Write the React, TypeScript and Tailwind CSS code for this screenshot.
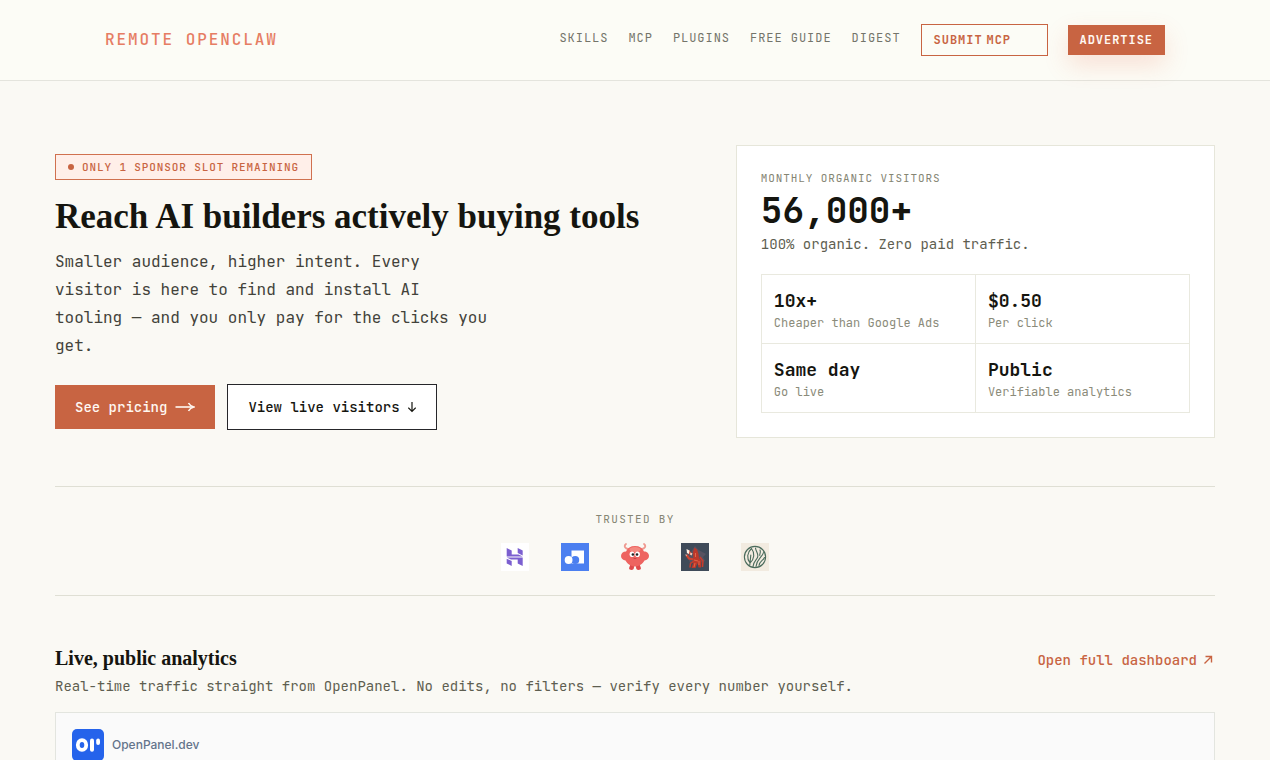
const navLinks = ["Skills", "MCP", "Plugins", "Free Guide", "Digest"];

const stats = [
    { value: "10x+", label: "Cheaper than Google Ads" },
    { value: "$0.50", label: "Per click" },
    { value: "Same day", label: "Go live" },
    { value: "Public", label: "Verifiable analytics" },
];

function Navbar() {
    return (
        <header className="border-b border-[#e4e4dd] bg-[#fcfcf6]">
            <div className="mx-auto flex h-20 max-w-[1160px] items-center justify-between px-[50px]">
                <a href="/" className="text-base font-medium tracking-[0.12em] text-[#e67d63] uppercase">
                    Remote OpenClaw
                </a>
                <nav className="flex items-center gap-5 text-xs tracking-[0.08em] uppercase">
                    {navLinks.map((name) => (
                        <a key={name} href="#" className="pb-1 text-[#74746a]">
                            {name}
                        </a>
                    ))}
                    <a href="#" className="flex h-8 items-center gap-1 border border-[#c86442] px-3 font-semibold text-[#c86442]">
                        <span>Submit</span>
                        <span className="w-12">MCP</span>
                    </a>
                    <a href="#" className="flex h-[30px] items-center bg-[#c86442] px-3 font-semibold text-[#fff8f2] shadow-[0_10px_24px_rgba(232,100,66,0.18)]">
                        Advertise
                    </a>
                </nav>
            </div>
        </header>
    );
}

function Hero() {
    return (
        <section className="grid grid-cols-[4fr_3fr] items-center gap-[42px] pt-16 pb-12">
            <div>
                <p className="inline-flex items-center gap-2 border border-[#d0714f] bg-[#ffefe9] px-3 py-1 text-[11px] leading-4 font-medium tracking-[0.08em] text-[#c86442] uppercase">
                    <span className="size-1.5 rounded-full bg-[#c86442]" />
                    Only 1 sponsor slot remaining
                </p>
                <h1 className="mt-4 font-['Liberation_Serif',serif] text-[35px] leading-[42px] font-bold whitespace-nowrap text-[#15150f]">
                    Reach AI builders actively buying tools
                </h1>
                <p className="mt-2.5 max-w-[440px] text-base leading-7 text-[#42423a]">
                    Smaller audience, higher intent. Every visitor is here to find and install AI tooling — and you only
                    pay for the clicks you get.
                </p>
                <div className="mt-6 flex items-center gap-3 text-sm leading-6 font-medium">
                    <a href="#pricing" className="flex items-center gap-2 bg-[#c86442] px-5 py-[10px] text-[#fff8f2]">
                        See pricing
                        <svg width="20" height="10" viewBox="0 0 20 10" fill="none" stroke="currentColor" strokeWidth="1.6">
                            <path d="M0.5 5H18" />
                            <path d="M13.5 1Q15 4 18.8 5Q15 6 13.5 9" />
                        </svg>
                    </a>
                    <a href="#analytics" className="flex items-center gap-2 border border-[#26262a] bg-white px-5 py-[10px] text-[#15150f]">
                        View live visitors
                        <svg width="8" height="12" viewBox="0 0 8 12" fill="none" stroke="currentColor" strokeWidth="1.2">
                            <path d="M4 1V10M0.3 6.6L4 10.3L7.7 6.6" />
                        </svg>
                    </a>
                </div>
            </div>
            <div className="border border-[#e6e6da] bg-white p-6">
                <p className="text-[11px] leading-4 tracking-[0.08em] text-[#858573] uppercase">
                    Monthly organic visitors
                </p>
                <p className="mt-1 text-[36px] leading-10 font-bold text-[#15150f]">56,000+</p>
                <p className="mt-1 text-sm leading-5 text-[#5e5e50]">100% organic. Zero paid traffic.</p>
                <dl className="mt-5 grid grid-cols-2 border-t border-l border-[#e9e9df]">
                    {stats.map((stat) => (
                        <div key={stat.label} className="flex flex-col-reverse border-r border-b border-[#e9e9df] p-3">
                            <dt className="text-xs text-[#8b8b7a]">{stat.label}</dt>
                            <dd className="text-lg leading-7 font-semibold text-[#15150f]">{stat.value}</dd>
                        </div>
                    ))}
                </dl>
            </div>
        </section>
    );
}

function PurpleLogo() {
    return (
        <svg className="size-7" viewBox="0 0 28 28">
            <rect width="28" height="28" fill="#fff" />
            <g fill="#7b5fd0">
                <path d="M5.7 5L10.7 7.6V11.6H17.5L21.7 13.6H5.7Z" />
                <path d="M16.7 5L21.7 7.6V12.4L16.7 10Z" />
                <path d="M21.7 23L16.7 20.4V16.5H10L5.7 14.5H21.7Z" />
                <path d="M5.7 15.7L10.7 18V23L5.7 20.4Z" />
            </g>
        </svg>
    );
}

function BlueLogo() {
    return (
        <svg className="size-7" viewBox="0 0 28 28">
            <rect width="28" height="28" fill="#4b7ff0" />
            <path d="M10.5 7.5H23V20.5H10.5Z" fill="#fff" />
            <circle cx="14.2" cy="17" r="4" fill="#4b7ff0" />
            <circle cx="7.6" cy="17" r="3.9" fill="#fff" />
        </svg>
    );
}

function CreatureLogo() {
    return (
        <svg className="size-7" viewBox="0 0 28 28">
            <path d="M8 6C4 6 2.5 3 5 1M20 6C24 6 25.5 3 23 1" fill="none" stroke="#ef9a90" strokeWidth="1.8" strokeLinecap="round" />
            <path d="M9.5 21H13V24Q13 27 10.5 27Q8 27 8 25.3ZM15 21H18.5L20 25.3Q20 27 17.5 27Q15 27 15 24Z" fill="#df4a4c" />
            <path d="M14 3C18.5 3 21.5 5 23 8.5C26 8.5 28 10.5 28 13C28 15.5 26 17 23.5 17.5C21.5 21 18 23.5 14 23.5S6.5 21 4.5 17.5C2 17 0 15.5 0 13C0 10.5 2 8.5 5 8.5C6.5 5 9.5 3 14 3Z" fill="#ee6460" />
            <ellipse cx="14" cy="6.5" rx="5.5" ry="2.5" fill="#f79a8e" opacity="0.7" />
            <ellipse cx="11" cy="11.3" rx="2.4" ry="2.8" fill="#fff" />
            <ellipse cx="16.5" cy="11.3" rx="2.4" ry="2.8" fill="#fff" />
            <circle cx="11.9" cy="11.5" r="1.3" fill="#222" />
            <circle cx="16" cy="11.5" r="1.3" fill="#222" />
            <path d="M12.5 15.2Q14 16.2 15.5 15.2" stroke="#b8393d" fill="none" strokeWidth="0.8" />
        </svg>
    );
}

function LobsterLogo() {
    return (
        <svg className="size-7" viewBox="0 0 28 28">
            <rect width="28" height="28" fill="#3f4b59" />
            <path d="M5 9L10 9L14 3L17.5 7L25 11L22 14L24 18L18 20H9Z" fill="#575361" />
            <path d="M5.5 12L8 15.5L13 16.5M7.5 8L10 11.5" stroke="#cf4430" strokeWidth="2.2" fill="none" />
            <path d="M12 9L13.5 4.5L16 6.5L17.5 11L18 15L20.5 18L20 24.5H17.5L16.5 20L14.5 25H10.5L12.5 19Z" fill="#bd382a" />
            <path d="M19 14L22 18L21.5 24M13 18L9.5 20.5L9 24.5" stroke="#c83d2c" strokeWidth="1.5" fill="none" />
            <path d="M14.5 10V14M13 17L17 18M14 20L13 24M18 18V22" stroke="#ea7450" strokeWidth="0.8" fill="none" />
            <path d="M5.5 6L8.5 7.5L8 11L6 10Z" fill="#fff3e6" />
            <path d="M9.5 9.5L11.5 10.5L10.5 12.5L9 11.5ZM4.5 11L6 12L5 13.5Z" fill="#f4cdb9" />
        </svg>
    );
}

function LeafLogo() {
    return (
        <svg className="size-7" viewBox="0 0 28 28" fill="none" stroke="#4a6b5c" strokeWidth="1.1" strokeLinecap="round">
            <rect width="28" height="28" fill="#f2ebe0" stroke="none" />
            <circle cx="14" cy="14" r="10.6" />
            <path d="M10.5 5.5C14 10 13.5 16 9 20C5.5 15.5 6 9.5 10.5 5.5ZM9.8 12L8.8 22" />
            <path d="M14.5 5C15 9 18 11 16.5 14.5C15.5 17 12.5 18 12 23.5M22.5 9.5C21.5 14 16 15.5 15 23.5M23.5 14.5C22 18 18.5 18 18 22.5M19 7C20 9.5 18.5 10.5 18.8 12.5" />
        </svg>
    );
}

function TrustedBy() {
    return (
        <section className="flex flex-col items-center gap-4 border-y border-[#dfdfd4] py-6">
            <h2 className="text-[11px] leading-4 tracking-[0.12em] text-[#858573] uppercase">Trusted by</h2>
            <div className="flex gap-8">
                <PurpleLogo />
                <BlueLogo />
                <CreatureLogo />
                <LobsterLogo />
                <LeafLogo />
            </div>
        </section>
    );
}

function Analytics() {
    return (
        <section id="analytics" className="pt-12">
            <div className="flex items-center justify-between">
                <h2 className="font-['Liberation_Serif',serif] text-xl leading-7 font-bold text-[#15150f]">
                    Live, public analytics
                </h2>
                <a href="#" className="flex items-center gap-1.5 pt-1 text-sm leading-6 font-medium text-[#c86442]">
                    Open full dashboard
                    <svg width="12" height="10" viewBox="0 0 12 10" fill="none" stroke="currentColor" strokeWidth="1.4">
                        <path d="M1.5 8.5L8.5 1.5M2.5 1.5H8.5V7.5" />
                    </svg>
                </a>
            </div>
            <p className="mt-1 text-sm leading-5 text-[#5e5e50]">
                Real-time traffic straight from OpenPanel. No edits, no filters — verify every number yourself.
            </p>
            <div className="mt-4 border border-[#e3e5df] bg-[#fafafa] p-4">
                <a href="#" className="inline-flex items-center gap-2 font-[Inter,sans-serif] text-xs font-medium text-[#64748b]">
                    <svg className="size-8" viewBox="0 0 32 32">
                        <rect width="32" height="32" rx="5" fill="#2563eb" />
                        <ellipse cx="10" cy="16" rx="4.2" ry="4.9" fill="none" stroke="#fff" strokeWidth="3.8" />
                        <rect x="18" y="9.5" width="4" height="13.3" rx="2" fill="#fff" />
                        <rect x="24.2" y="9.5" width="3.8" height="6.5" rx="1.9" fill="#fff" />
                    </svg>
                    OpenPanel.dev
                </a>
            </div>
        </section>
    );
}

export default function App() {
    return (
        <div className="min-h-screen bg-[#faf9f4] font-['JetBrains_Mono','DejaVu_Sans_Mono',monospace]">
            <Navbar />
            <main className="mx-auto max-w-[1160px]">
                <Hero />
                <TrustedBy />
                <Analytics />
            </main>
        </div>
    );
}
